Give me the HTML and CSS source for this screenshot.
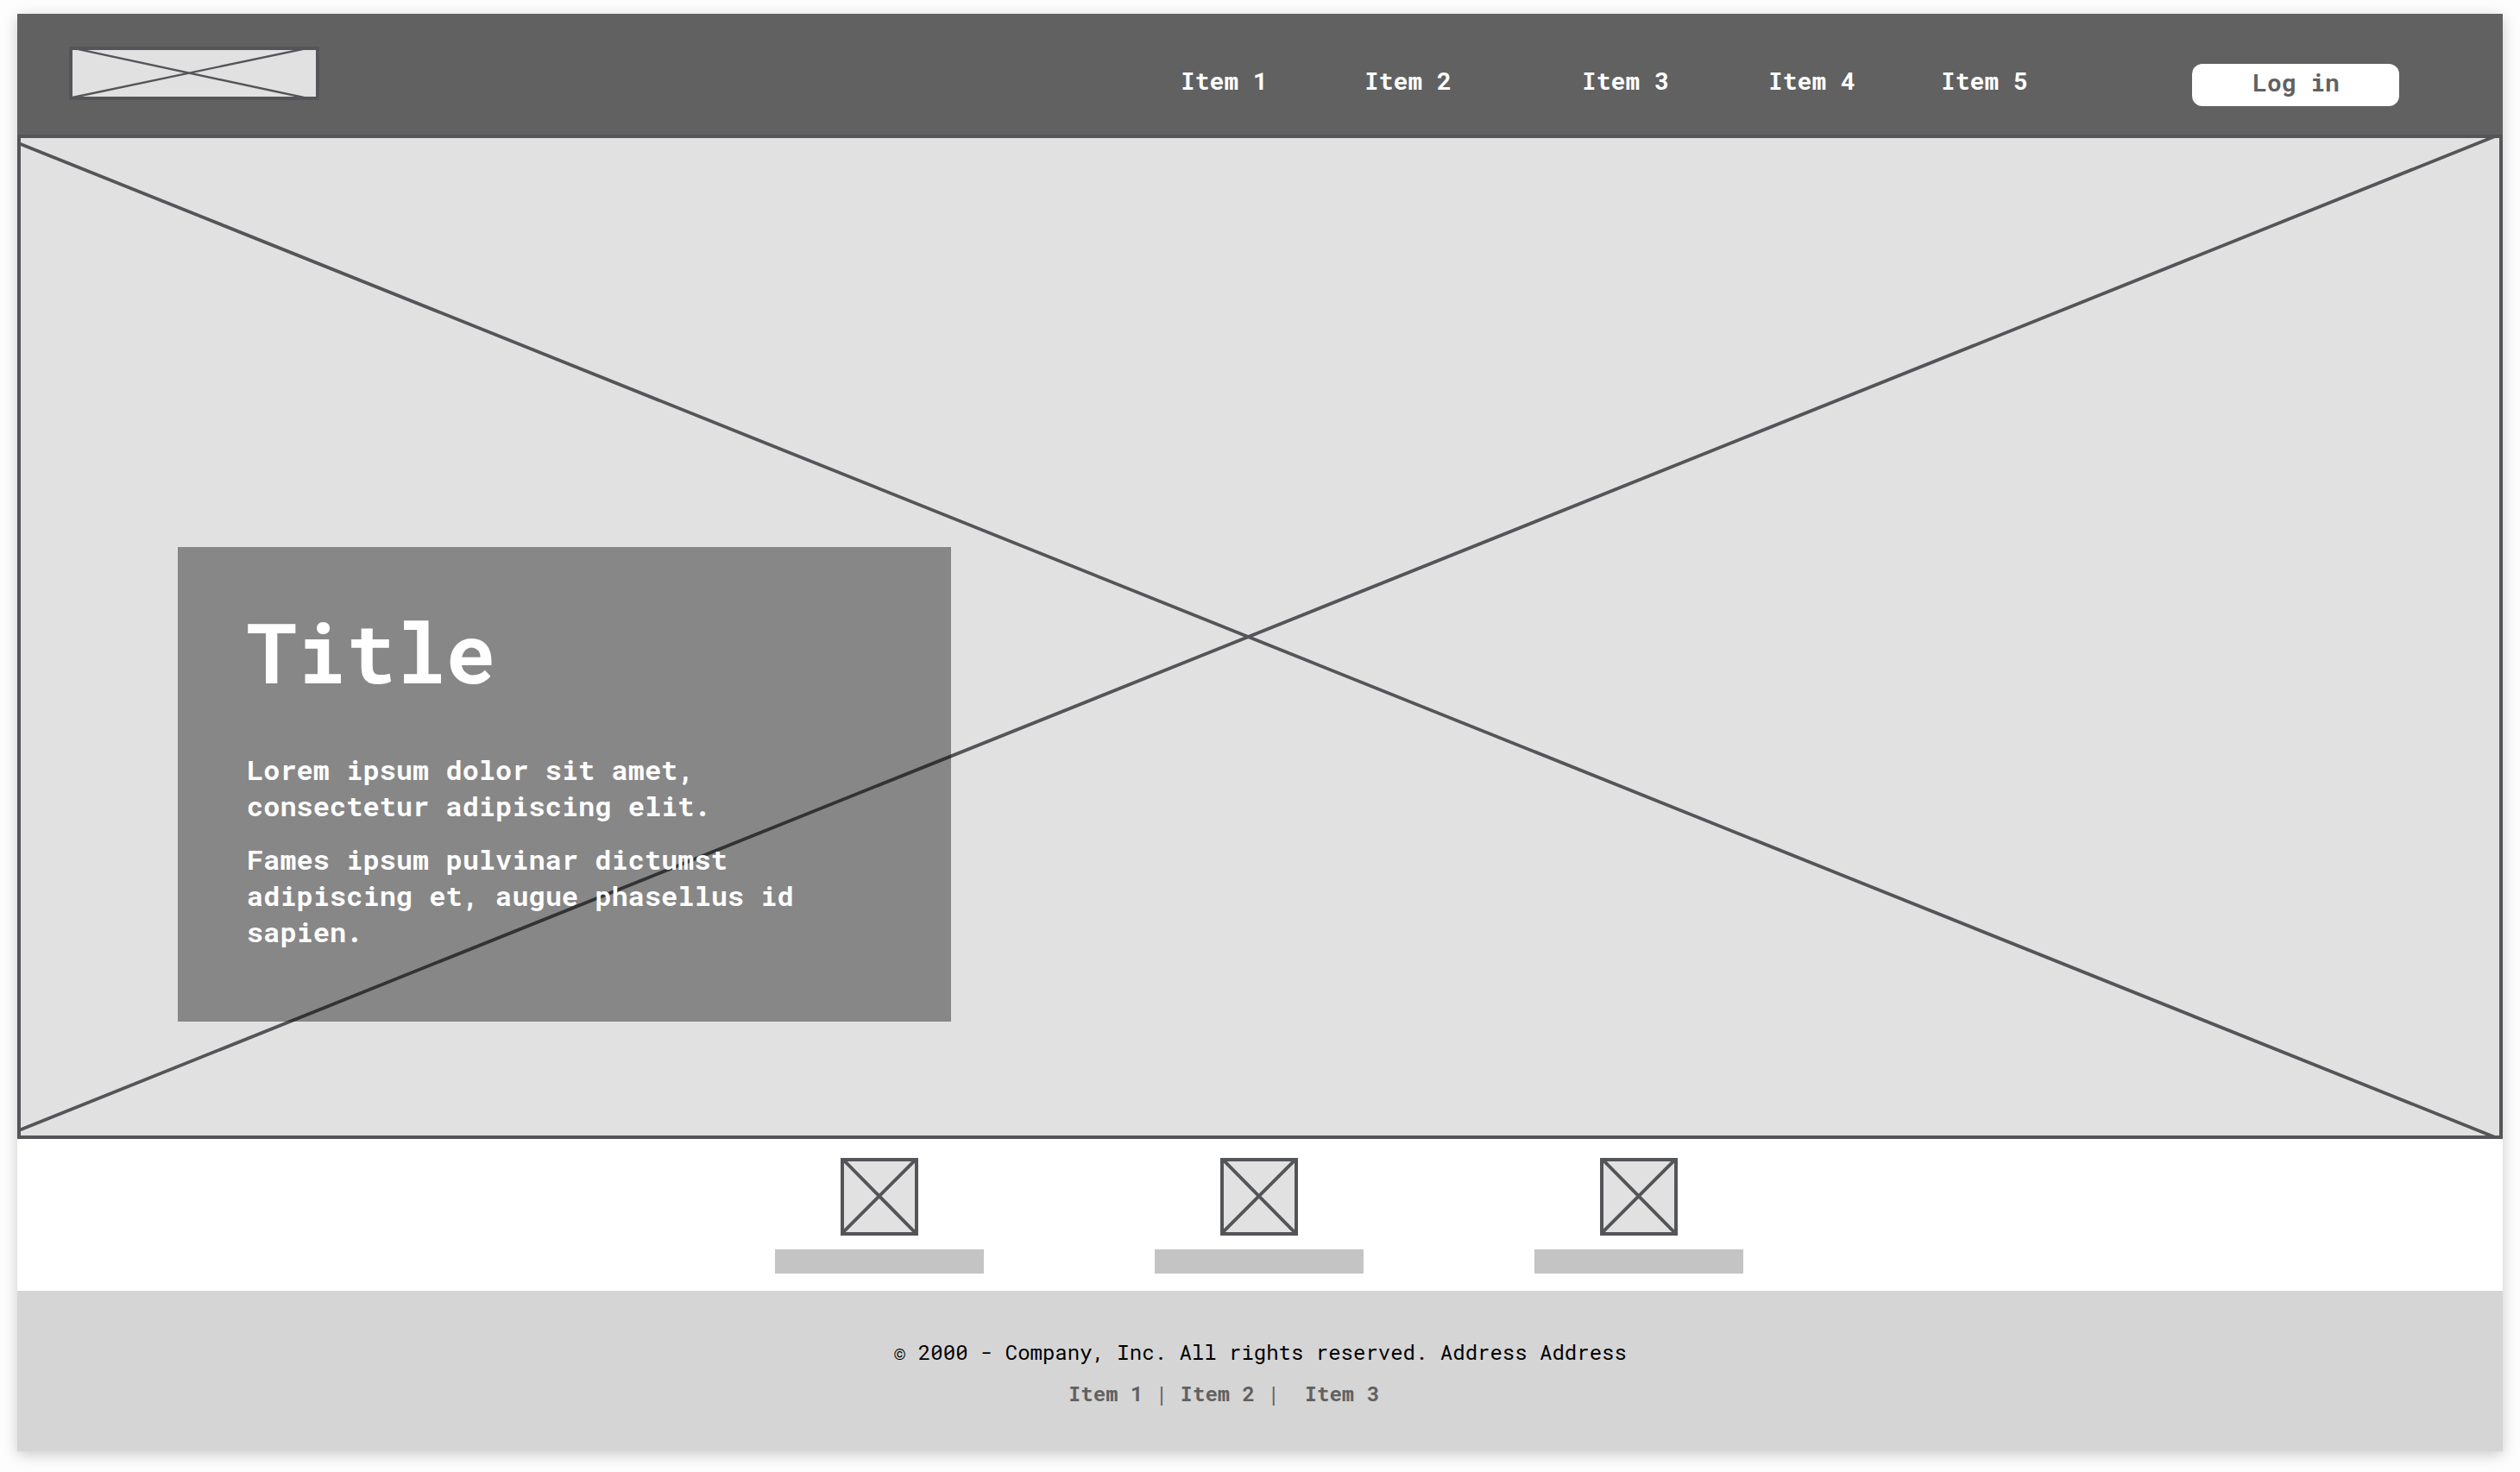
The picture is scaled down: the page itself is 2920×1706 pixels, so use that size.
FILE: index.html
```
<!DOCTYPE html>
<html lang="en">
<head>
  <meta charset="UTF-8">
  <meta name="viewport" content="width=device-width, initial-scale=1.0">
  <title>Company</title>
  <link rel="stylesheet" href="styles.css">
</head>
<body>
  <div class="page">
    <header class="header">
      <a class="logo" href="#" aria-label="Home">
        <svg viewBox="0 0 290 62">
          <path d="M4 1.6 L286 62 M4 59 L286 -0.2"/>
        </svg>
      </a>
      <nav class="nav">
        <a href="#">Item 1</a>
        <a href="#">Item 2</a>
        <a href="#">Item 3</a>
        <a href="#">Item 4</a>
        <a href="#">Item 5</a>
      </nav>
      <button class="login">Log in</button>
    </header>

    <section class="hero">
      <svg class="cross" viewBox="0 0 2880 1164">
        <path d="M2 10.2 L2871 1162 M2 1154 L2871 2"/>
      </svg>
      <div class="card">
        <h1>Title</h1>
        <p>Lorem ipsum dolor sit amet, consectetur adipiscing elit.</p>
        <p>Fames ipsum pulvinar dictumst adipiscing et, augue phasellus id sapien.</p>
      </div>
    </section>

    <section class="features">
      <div class="feature">
        <svg class="thumb" viewBox="4 4 82 82"><path d="M3 2 L88 88 M2 87 L87 2"/></svg>
        <div class="bar"></div>
      </div>
      <div class="feature">
        <svg class="thumb" viewBox="4 4 82 82"><path d="M3 2 L88 88 M2 87 L87 2"/></svg>
        <div class="bar"></div>
      </div>
      <div class="feature">
        <svg class="thumb" viewBox="4 4 82 82"><path d="M3 2 L88 88 M2 87 L87 2"/></svg>
        <div class="bar"></div>
      </div>
    </section>

    <footer class="footer">
      <p>© 2000 - Company, Inc. All rights reserved. Address Address</p>
      <p class="links"><a href="#">Item 1</a> | <a href="#">Item 2</a> |  <a href="#">Item 3</a></p>
    </footer>
  </div>
</body>
</html>
```
FILE: styles.css
```
* {
  box-sizing: border-box;
}

body {
  margin: 0;
  padding: 16px 20px 24px;
  background: #fdfdfd;
  font-family: "Roboto Mono", "DejaVu Sans Mono", monospace;
}

h1, p {
  margin: 0;
}

a {
  color: inherit;
  text-decoration: none;
}

.page {
  height: 1666px;
  background: #fff;
  box-shadow: 0 4px 16px rgba(0, 0, 0, 0.2);
}

/* Header */
.header {
  display: flex;
  align-items: flex-start;
  height: 140px;
  padding: 38px 120px 0 60px;
  background: #616161;
}

.logo {
  width: 290px;
  height: 62px;
  border: 4px solid #545558;
  background: #e1e1e1;
}

.logo svg {
  display: block;
  width: 290px;
  height: 62px;
  margin: -4px;
  fill: none;
  stroke: #545558;
  stroke-width: 2.4;
}

.nav {
  display: grid;
  grid-template-columns: 213px 252px 216px 200px auto;
  margin: 20px 0 0 998px;
  color: #fff;
  font-size: 28px;
  font-weight: 700;
  line-height: 39px;
}

.nav a {
  white-space: nowrap;
}

.login {
  width: 240px;
  height: 49px;
  margin: 20px 0 0 auto;
  padding: 0 0 6px 1px;
  border: none;
  border-radius: 12px;
  background: #fff;
  color: #616161;
  font: 700 28px/37px "Roboto Mono", "DejaVu Sans Mono", monospace;
}

/* Hero */
.hero {
  position: relative;
  height: 1164px;
  padding: 474px 0 0 182px;
  border: 4px solid #545558;
  background: #e1e1e1;
}

.cross {
  position: absolute;
  top: -4px;
  left: -4px;
  width: 2880px;
  height: 1164px;
  fill: none;
  stroke: #545558;
  stroke-width: 3.8;
}

.card {
  position: relative;
  width: 896px;
  height: 550px;
  padding: 58px 160px 0 80px;
  background: rgba(0, 0, 0, 0.4);
  color: #fff;
}

.card h1 {
  margin-bottom: 53px;
  font-size: 96px;
  font-weight: 700;
  line-height: 126px;
}

.card p {
  margin-bottom: 20px;
  font-size: 32px;
  font-weight: 700;
  line-height: 42px;
}

/* Features */
.features {
  display: flex;
  gap: 198px;
  height: 176px;
  padding: 22px 0 0 878px;
}

.feature {
  display: flex;
  flex-direction: column;
  align-items: center;
  gap: 16px;
}

.thumb {
  width: 90px;
  height: 90px;
  border: 4px solid #545558;
  background: #e1e1e1;
  fill: none;
  stroke: #545558;
  stroke-width: 4;
}

.bar {
  width: 242px;
  height: 28px;
  background: #c4c4c4;
}

/* Footer */
.footer {
  height: 186px;
  padding-top: 55px;
  background: #d5d5d5;
  font-size: 24px;
  line-height: 32px;
  text-align: center;
}

.links {
  margin-top: 16px;
  padding-right: 84px;
  color: #616161;
  white-space: pre;
}

.links a {
  font-weight: 700;
}
```
